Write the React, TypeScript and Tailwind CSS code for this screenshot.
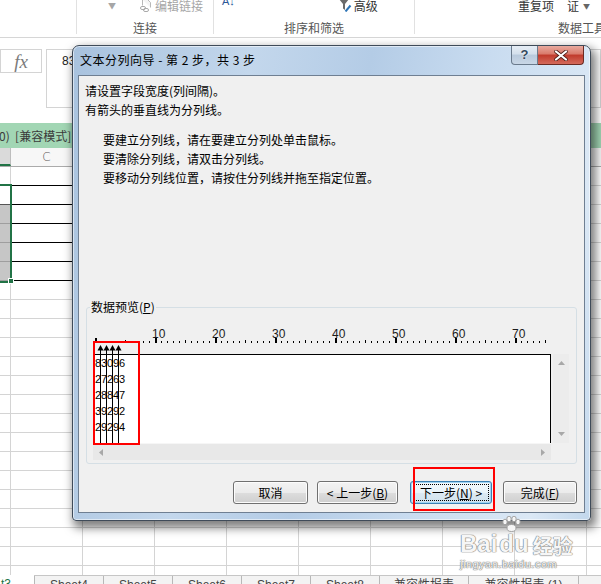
import React from 'react';

const CJK = "font-['Noto_Sans_CJK_SC','Noto_Sans',sans-serif]";

// 리본 아이콘
function LinkIcon() {
  return (
    <svg width="12" height="13" viewBox="0 0 12 13" className="shrink-0">
      <path d="M2.5 0.5h5l3 3v5" fill="#f4f4f4" stroke="#b8b8b8" />
      <path d="M2.5 0.5v6" stroke="#b8b8b8" />
      <rect x="0.5" y="7.5" width="5" height="3" rx="1.5" fill="none" stroke="#a9a9a9" />
      <rect x="3.5" y="9.5" width="5" height="3" rx="1.5" fill="none" stroke="#a9a9a9" />
    </svg>
  );
}

function FilterIcon() {
  return (
    <svg width="13" height="13" viewBox="0 0 13 13" className="shrink-0">
      <path d="M0 0h10l-4 5v6l-2-1.5V5z" fill="#6b6b6b" />
      <path d="M6.5 12.5l5-6" stroke="#2e75b6" strokeWidth="2" />
    </svg>
  );
}

function Ribbon() {
  return (
    <div className={`flex h-[38px] shrink-0 border-b border-[#d6d6d6] bg-white text-[12px] leading-[12px] text-[#555] ${CJK}`}>
      <div className="h-[34px] w-[77px] shrink-0 border-r border-[#e1e1e1]" />
      <div className="flex h-[34px] w-[137px] shrink-0 flex-col border-r border-[#e1e1e1]">
        <div className="flex h-[11px] items-center text-[#a6a6a6]">
          <span className="ml-[31px] w-[6px] text-[8px]">▼</span>
          <span className="ml-[26px]"><LinkIcon /></span>
          <span className="ml-[3px]">编辑链接</span>
        </div>
        <div className="mt-auto text-center">连接</div>
      </div>
      <div className="flex h-[34px] w-[201px] shrink-0 flex-col border-r border-[#e1e1e1]">
        <div className="flex h-[11px] items-center">
          <span className="ml-[8px] -translate-y-[5px] font-['Liberation_Sans',sans-serif] text-[11px] text-[#2b5797]">A↓</span>
          <span className="ml-[104px]"><FilterIcon /></span>
          <span className="ml-[2px] text-[#333]">高级</span>
        </div>
        <div className="mt-auto text-center">排序和筛选</div>
      </div>
      <div className="flex h-[34px] flex-1 flex-col">
        <div className="flex h-[11px] items-center text-[#333]">
          <span className="ml-[103px]">重复项</span>
          <span className="ml-[13px]">证</span>
          <span className="ml-[4px] text-[7px] text-[#666]">▼</span>
        </div>
        <div className="mt-auto pl-[143px] whitespace-nowrap">数据工具</div>
      </div>
    </div>
  );
}

function FormulaBar() {
  return (
    <div className="flex h-[85px] shrink-0 items-start gap-[4px] bg-white pt-[11px]">
      <div className="flex h-[24px] w-[42px] shrink-0 items-center justify-center border border-[#d4d4d4]">
        <span className="font-['Liberation_Serif',serif] text-[19px] italic leading-none text-[#7b7b7b]">fx</span>
      </div>
      <div className="h-[59px] flex-1 border border-[#d4d4d4] pl-[15px] pt-[3px] text-[12px] leading-[16px] text-[#222]">
        83096
      </div>
    </div>
  );
}

function ColumnHeader() {
  return (
    <div className="flex h-[19px] shrink-0 border-b border-[#ababab] bg-[#f7f7f7] text-[13px] text-[#555]">
      <div className="h-full w-[11px] shrink-0 border-r border-b-2 border-r-[#bdbdbd] border-b-[#217346] bg-[#dadada]" />
      <div className="flex h-full w-[72px] shrink-0 items-center justify-center border-r border-[#d4d4d4] font-['DejaVu_Sans',sans-serif] text-[12px] font-light">C</div>
      <div className="flex-1" />
    </div>
  );
}

function GridRow({ index }: { index: number }) {
  const black = index <= 5;
  const gray = index >= 2 && index <= 5;
  return (
    <div className="flex h-[19px] shrink-0">
      <div
        className={`h-full w-[11px] shrink-0 border-r border-b border-r-[#d4d4d4] ${
          gray ? 'border-b-[#9e9e9e] bg-[#c6c6c6]' : black ? 'border-b-[#555] bg-white' : 'border-b-[#d4d4d4] bg-white'
        }`}
      />
      <div className={`h-full w-[72px] shrink-0 border-r border-b border-r-[#d4d4d4] ${black ? 'border-b-black' : 'border-b-[#d4d4d4]'}`} />
      {Array.from({ length: 7 }, (_, j) => (
        <div key={j} className="h-full w-[72px] shrink-0 border-r border-b border-[#d4d4d4]" />
      ))}
      <div className="h-full flex-1 border-b border-[#d4d4d4]" />
    </div>
  );
}

const tabs = [
  { name: 'Sheet4', w: 'w-[69px]' },
  { name: 'Sheet5', w: 'w-[69px]' },
  { name: 'Sheet6', w: 'w-[69px]' },
  { name: 'Sheet7', w: 'w-[69px]' },
  { name: 'Sheet8', w: 'w-[69px]' },
  { name: '兼容性报表', w: 'w-[89px]' },
  { name: '兼容性报表 (1)', w: 'w-[110px]' },
];

function SheetTabs() {
  return (
    <div className={`flex h-[9px] shrink-0 overflow-hidden text-[12px] leading-[13px] text-[#444] ${CJK}`}>
      <div className="w-[34px] shrink-0 bg-white pl-[1px] pt-[3px] font-['Liberation_Sans',sans-serif] text-[#217346]">t3</div>
      <div className="flex flex-1 border-t border-[#c6c6c6] bg-[#f3f3f3]">
        {tabs.map((t) => (
          <div key={t.name} className={`${t.w} shrink-0 border-l border-[#b8b8b8] pt-[3px] text-center font-['Liberation_Sans','Noto_Sans_CJK_SC',sans-serif] whitespace-nowrap`}>
            {t.name}
          </div>
        ))}
        <div className="flex-1 border-l border-[#b8b8b8]" />
      </div>
    </div>
  );
}

function Ruler() {
  const ticks = Array.from({ length: 77 }, (_, i) => i);
  return (
    <svg width="458" height="23" className="block">
      {ticks.map((i) => {
        const x = 2 + i * 6;
        if (i % 10 === 0) return <rect key={i} x={x} y={18} width={2} height={5} fill="#000" />;
        if (i % 5 === 0) return <rect key={i} x={x} y={20} width={1} height={3} fill="#000" />;
        return <rect key={i} x={x} y={21} width={1} height={2} fill="#000" />;
      })}
      {[10, 20, 30, 40, 50, 60, 70].map((n) => (
        <text key={n} x={2 + n * 6 - 3} y={17.5} fontSize={12} fontFamily="Liberation Sans, sans-serif" fill="#1c1c1c">
          {n}
        </text>
      ))}
    </svg>
  );
}

const rows = ['83096', '27263', '28847', '39292', '29294'];

function Preview() {
  return (
    <div className="ml-[6px] mt-[12px] w-[476px]">
      <Ruler />
      <div className="flex">
        <div className="relative w-[458px] shrink-0">
          <div className="h-[11px]" />
          <div className="h-[89px] border-t border-r border-black bg-white pl-[2px] font-['Liberation_Sans',sans-serif] text-[11px] leading-[16px] tracking-[-0.1px] text-black">
            {rows.map((r) => (
              <div key={r}>{r}</div>
            ))}
          </div>
          {/* 분할선 */}
          <svg width="40" height="100" className="absolute left-0 top-0">
            {[7.5, 13.5, 19.5, 25.5].map((x) => (
              <g key={x}>
                <line x1={x} y1={3} x2={x} y2={100} stroke="#000" strokeWidth={1} />
                <polygon points={`${x - 3},7.5 ${x},2 ${x + 3},7.5`} fill="#000" />
              </g>
            ))}
          </svg>
        </div>
        <div className="ml-[2px] mt-[11px] flex h-[89px] w-[16px] flex-col items-center justify-between bg-[#ececec] py-[7px]">
          <svg width="7" height="4"><polygon points="0,4 3.5,0 7,4" fill="#a8a8a8" /></svg>
          <svg width="7" height="4"><polygon points="0,0 3.5,4 7,0" fill="#a8a8a8" /></svg>
        </div>
      </div>
      <div className="flex h-[17px] w-[458px] items-center justify-between border-t border-[#f6f6f6] bg-[#e8e8e8] px-[6px]">
        <svg width="4" height="7"><polygon points="4,0 0,3.5 4,7" fill="#a8a8a8" /></svg>
        <svg width="4" height="7"><polygon points="0,0 4,3.5 0,7" fill="#a8a8a8" /></svg>
      </div>
    </div>
  );
}

function WizardButton({ children, w, focused }: { children: React.ReactNode; w: string; focused?: boolean }) {
  return (
    <div
      className={`${w} flex h-[23px] shrink-0 items-center justify-center rounded-[3px] border text-[12px] leading-none text-black ${
        focused
          ? 'border-[#3c7fb1] bg-[linear-gradient(#f4f9fc,#e9f3f9_50%,#dce9f2_50%,#d0e2ee)] p-[2px] shadow-[inset_0_0_0_1px_#9fd3f2]'
          : 'border-[#707070] bg-[linear-gradient(#f3f3f3,#ebebeb_50%,#dddddd_50%,#cfcfcf)] shadow-[inset_0_0_0_1px_#fcfcfc]'
      }`}
    >
      {focused ? (
        <div className="flex h-full w-full items-center justify-center border border-dotted border-black">{children}</div>
      ) : (
        children
      )}
    </div>
  );
}

function Dialog() {
  return (
    <div className="absolute left-[72px] top-[45px] h-[476px] w-[519px] rounded-t-[7px] rounded-b-[4px] border border-[#3f4b59] bg-[linear-gradient(100deg,#a8c2de_0%,#c3d7ec_30%,#b4cce6_50%,#c9dcf0_70%,#dbe8f5_90%,#c2d7ec_100%)] shadow-[inset_0_0_0_1px_rgba(255,255,255,0.55),3px_5px_10px_2px_rgba(0,0,0,0.5)]">
      {/* 타이틀 바 */}
      <div className={`flex h-[29px] items-start ${CJK}`}>
        <span className="ml-[7px] mt-[6px] text-[12px] leading-[16px] tracking-[0.5px] text-black whitespace-pre">
          文本分列向导 - 第 2 步，共 3 步
        </span>
        <div className="ml-auto mr-[6px] flex">
          <div className="flex h-[19px] w-[27px] items-center justify-center rounded-bl-[4px] border border-t-0 border-[#6a7a8c] bg-[linear-gradient(#e6edf5,#d3dfeb_45%,#b8c9dc_50%,#c9d7e6)] font-['Liberation_Sans',sans-serif] text-[13px] font-bold text-[#34495e] [text-shadow:0_0_2px_#fff]">
            ?
          </div>
          <div className="flex h-[19px] w-[46px] items-center justify-center rounded-br-[4px] border border-l-0 border-t-0 border-[#6b2a22] bg-[linear-gradient(#e8aa9f,#d9796a_45%,#c0392b_50%,#d46a5b)]">
            <svg width="14" height="11" viewBox="0 0 14 11">
              <path d="M2 1.5l10 8M12 1.5l-10 8" stroke="#4a1a15" strokeWidth="3.6" strokeLinecap="round" />
              <path d="M2 1.5l10 8M12 1.5l-10 8" stroke="#fff" strokeWidth="2.2" strokeLinecap="round" />
            </svg>
          </div>
        </div>
      </div>

      {/* 본문 */}
      <div className={`mx-[5px] flex h-[438px] flex-col border border-[#6f7f92] bg-[#f0f0f0] text-[12px] text-black ${CJK}`}>
        <div className="pl-[6px] pt-[5px] leading-[19px]">
          <p>请设置字段宽度(列间隔)。</p>
          <p>有箭头的垂直线为分列线。</p>
        </div>
        <div className="mt-[11px] pl-[24px] leading-[19px]">
          <p>要建立分列线，请在要建立分列处单击鼠标。</p>
          <p>要清除分列线，请双击分列线。</p>
          <p>要移动分列线位置，请按住分列线并拖至指定位置。</p>
        </div>

        {/* 데이터 미리보기 */}
        <div className="relative ml-[7px] mt-[120px] h-[157px] w-[491px] rounded-[3px] border border-[#d5dfe5]">
          <span className="absolute -top-[9px] left-[3px] bg-[#f0f0f0] px-[1px] leading-[16px]">
            数据预览(<span className="underline">P</span>)
          </span>
          <Preview />
        </div>

        {/* 버튼 */}
        <div className="mt-[17px] flex justify-end pr-[7px]">
          <WizardButton w="w-[75px]">取消</WizardButton>
          <div className="w-[9px]" />
          <WizardButton w="w-[81px]">
            &lt; 上一步(<span className="underline">B</span>)
          </WizardButton>
          <div className="w-[12px]" />
          <WizardButton w="w-[82px]" focused>
            下一步(<span className="underline">N</span>) &gt;
          </WizardButton>
          <div className="w-[11px]" />
          <WizardButton w="w-[74px]">
            完成(<span className="underline">F</span>)
          </WizardButton>
        </div>
      </div>
    </div>
  );
}

function Watermark() {
  return (
    <div className="pointer-events-none absolute left-[460px] top-[516px] flex flex-col text-[#f6f6f6] [text-shadow:0_0_1px_#7a7a7a,0_0_1px_#7a7a7a,0_0_1px_#7a7a7a]">
      <svg width="22" height="16" viewBox="0 0 22 16" className="ml-[40px]">
        <g fill="#f6f6f6" stroke="#9a9a9a" strokeWidth="0.9">
          <ellipse cx="5" cy="6" rx="2.2" ry="2.8" />
          <ellipse cx="9" cy="3" rx="2.2" ry="2.8" />
          <ellipse cx="14" cy="3" rx="2.2" ry="2.8" />
          <ellipse cx="18" cy="6" rx="2.2" ry="2.8" />
          <ellipse cx="11.5" cy="12" rx="4.5" ry="3.5" />
        </g>
      </svg>
      <div className="flex items-end leading-none">
        <span className="font-['Liberation_Sans',sans-serif] text-[24px] font-bold">Bai</span>
        <span className="ml-[2px] font-['Liberation_Sans',sans-serif] text-[24px] font-bold">du</span>
        <span className={`ml-[4px] text-[20px] font-bold ${CJK}`}>经验</span>
      </div>
      <span className="mt-[3px] font-['Liberation_Sans',sans-serif] text-[11px] leading-none tracking-[0.5px]">jingyan.baidu.com</span>
    </div>
  );
}

export default function App() {
  return (
    <div className="relative h-[584px] w-[601px] overflow-hidden bg-white font-['Liberation_Sans',sans-serif]">
      <div className="flex h-full flex-col">
        <Ribbon />
        <FormulaBar />
        <div className={`flex h-[25px] shrink-0 items-center overflow-hidden bg-[#a2d6b4] text-[12px] text-[#3b3b3b] ${CJK}`}>
          <span className="-ml-[1px] whitespace-pre">0)  [兼容模式]</span>
        </div>
        <ColumnHeader />
        <div className="flex flex-1 flex-col overflow-hidden">
          {Array.from({ length: 22 }, (_, i) => (
            <GridRow key={i} index={i} />
          ))}
        </div>
        <SheetTabs />
      </div>

      {/* 선택 영역 */}
      <div className="absolute left-[-3px] top-[184px] h-[99px] w-[15px] border-2 border-[#217346]" />
      <div className="absolute left-[8px] top-[278px] h-[6px] w-[6px] border border-white bg-[#217346]" />

      <Dialog />

      {/* 빨간 표시 */}
      <div className="absolute left-[93px] top-[341px] h-[104px] w-[47px] border-2 border-[#ff0000]" />
      <div className="absolute left-[413px] top-[467px] h-[44px] w-[82px] border-2 border-[#ff0000]" />

      <Watermark />
    </div>
  );
}
